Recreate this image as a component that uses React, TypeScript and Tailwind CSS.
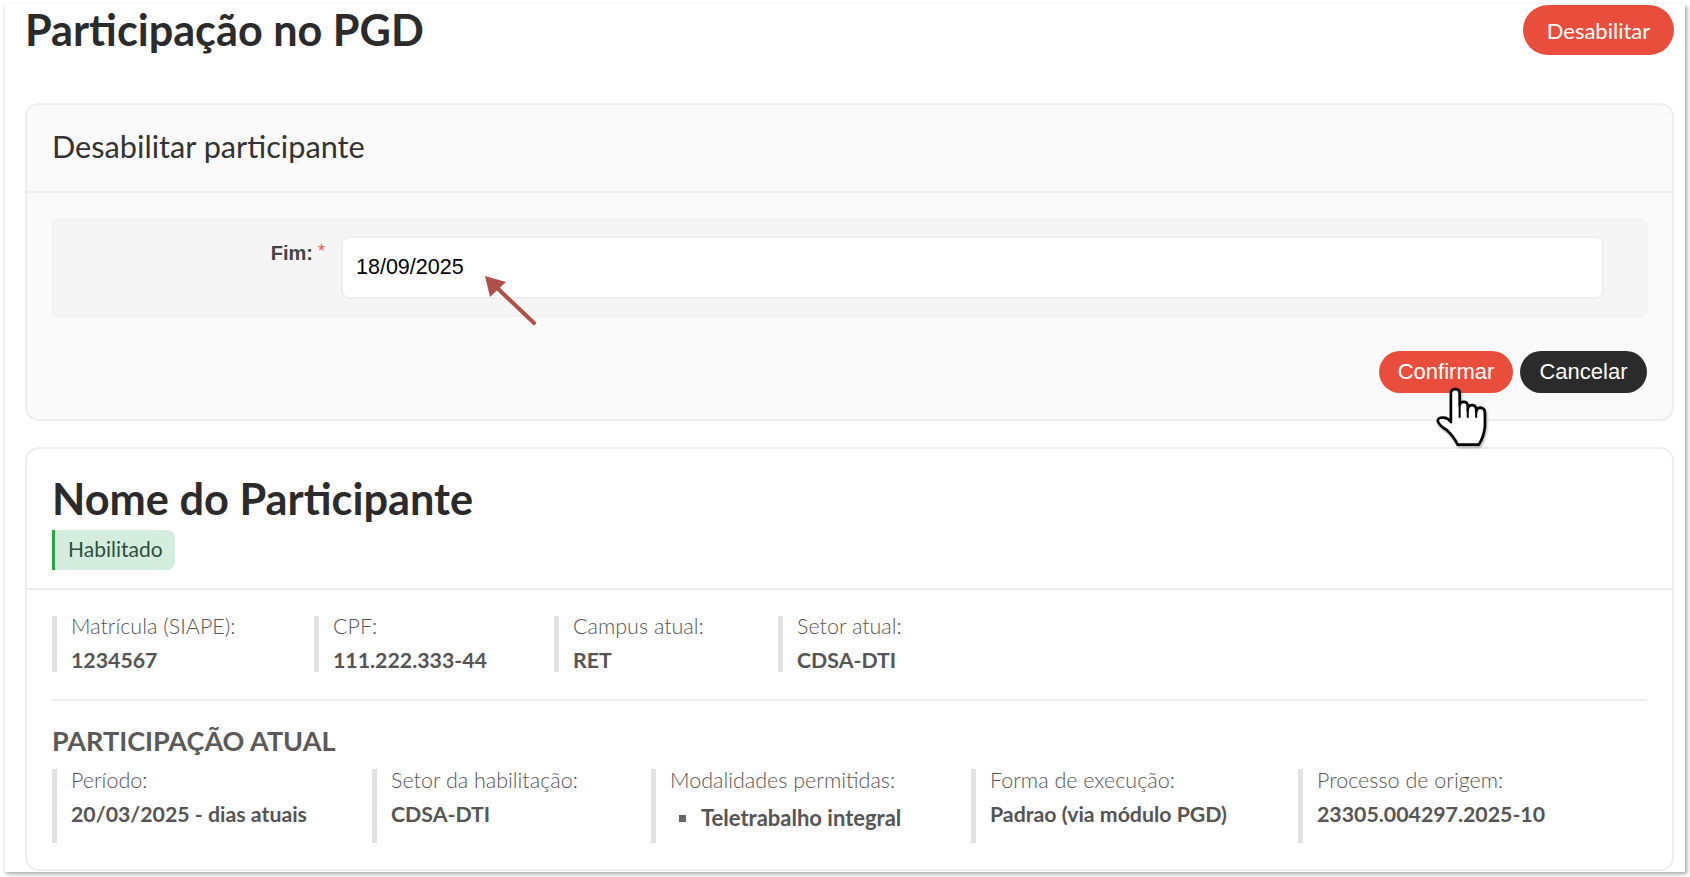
const resumo = [
  { label: 'Matrícula (SIAPE):', value: '1234567', width: 'w-[262px]' },
  { label: 'CPF:', value: '111.222.333-44', width: 'w-[240px]' },
  { label: 'Campus atual:', value: 'RET', width: 'w-[224px]' },
  { label: 'Setor atual:', value: 'CDSA-DTI', width: 'w-[200px]' },
];

const participacao = [
  { label: 'Período:', value: '20/03/2025 - dias atuais', width: 'w-[320px]' },
  { label: 'Setor da habilitação:', value: 'CDSA-DTI', width: 'w-[279px]' },
  { label: 'Modalidades permitidas:', value: 'Teletrabalho integral', width: 'w-[320px]', bullet: true },
  { label: 'Forma de execução:', value: 'Padrao (via módulo PGD)', width: 'w-[327px]' },
  { label: 'Processo de origem:', value: '23305.004297.2025-10', width: 'w-[300px]' },
];

function Campo({ label, value, width, bullet, tall }: { label: string; value: string; width: string; bullet?: boolean; tall?: boolean }) {
  return (
    <div className={`${width} ${tall ? 'h-[74px]' : 'h-[56px]'} shrink-0 border-l-[5px] border-[#e2e2e2] pl-[14px]`}>
      <div className={`${tall ? 'mt-0' : '-mt-[1px]'} h-[23px] text-[21.5px] leading-[23px] font-light text-[#555555]`}>{label}</div>
      {bullet ? (
        <div className={`mt-[14px] flex h-[24px] items-center pl-[9px] text-[22px] leading-[24px] font-bold text-[#555555]`}>
          <span className="mr-[15px] h-[7px] w-[7px] bg-[#666666]" />
          {value}
        </div>
      ) : (
        <div className={`${tall ? 'mt-[10px]' : 'mt-[10px]'} h-[24px] text-[21.3px] leading-[24px] font-bold text-[#555555]`}>{value}</div>
      )}
    </div>
  );
}

export default function App() {
  return (
    <div className="h-[877px] w-[1690px] overflow-hidden bg-white font-['Lato',sans-serif]">
      <div className="relative ml-[4px] mt-[4px] h-[868px] w-[1681px] border-l border-[#eeeeee] bg-white pl-[20px] pr-[11px] shadow-[2px_2px_4px_rgba(0,0,0,0.35)]">
        {/* Cabecalho */}
        <div className="flex h-[96px] items-start justify-between">
          <h1 className="text-[43.2px] leading-[50px] font-bold text-[#2b2b2b]">Participação no PGD</h1>
          <button className="mt-[1px] h-[50px] w-[151px] rounded-full bg-[#e94e3d] text-[22px] text-white">Desabilitar</button>
        </div>

        {/* Formulario */}
        <section className="mt-[3px] h-[318px] rounded-[14px] border-2 border-[#eeeeee] bg-[#fafafa]">
          <div className="flex h-[88px] items-center border-b-2 border-[#eeeeee] pb-[2px] pl-[25px] text-[30.7px] text-[#333333]">
            Desabilitar participante
          </div>
          <div className="px-[25px] pt-[26px]">
            <div className="flex h-[98px] rounded-[6px] border border-[#f0f0f0] bg-[#f5f5f5] pt-[16px]">
              <div className="flex w-[272px] justify-end pt-[4px] font-['Liberation_Sans',sans-serif] text-[20px] leading-[26px] font-bold text-[#444444]">
                Fim:<span className="ml-[5px] text-[18px] leading-[22px] font-normal text-[#e9574a]">*</span>
              </div>
              <input
                readOnly
                value="18/09/2025"
                className="ml-[16px] h-[63px] w-[1263px] rounded-[8px] border-2 border-[#eeeeee] bg-white pl-[13px] font-['Liberation_Sans',sans-serif] text-[21.5px] text-black outline-none"
              />
            </div>
            <div className="mt-[34px] flex justify-end gap-[7px]">
              <button className="h-[42px] w-[134px] rounded-full bg-[#e94e3d] pb-[2px] font-['Liberation_Sans',sans-serif] text-[22px] text-white">Confirmar</button>
              <button className="h-[42px] w-[127px] rounded-full bg-[#2b2b2b] pb-[2px] font-['Liberation_Sans',sans-serif] text-[22px] text-white">Cancelar</button>
            </div>
          </div>
        </section>

        {/* Dados do participante */}
        <section className="mt-[26px] h-[424px] rounded-[14px] border-2 border-[#eeeeee] bg-white">
          <div className="h-[141px] border-b-2 border-[#eeeeee] px-[25px] pt-[22px]">
            <h2 className="text-[43.3px] leading-[54px] font-bold text-[#2b2b2b]">Nome do Participante</h2>
            <span className="mt-[5px] flex h-[40px] w-[123px] items-center rounded-r-[8px] border-l-[3px] border-[#28a745] bg-[#d4edde] pb-[2px] pl-[13px] text-[21px] text-[#2f4f3c]">
              Habilitado
            </span>
          </div>
          <div className="px-[25px] pt-[26px]">
            <div className="flex">
              {resumo.map((item) => (
                <Campo key={item.label} {...item} />
              ))}
            </div>
            <div className="mt-[27px] border-t-2 border-[#eeeeee]" />
            <h3 className="mt-[23px] text-[27px] leading-[34px] font-bold text-[#5a5a5a]">PARTICIPAÇÃO ATUAL</h3>
            <div className="mt-[11px] flex">
              {participacao.map((item) => (
                <Campo key={item.label} {...item} tall />
              ))}
            </div>
          </div>
        </section>

        {/* Anotacoes sobre a captura */}
        <svg className="absolute left-[476px] top-[269px]" width="60" height="62" viewBox="0 0 60 62">
          <line x1="53" y1="50" x2="12" y2="11" stroke="#b0504a" strokeWidth="4" strokeLinecap="round" />
          <polygon points="4,3 25,9 9,24" fill="#b0504a" />
        </svg>
        <svg className="absolute left-[1429px] top-[381px] drop-shadow-[1px_2px_1px_rgba(0,0,0,0.3)]" width="54" height="64" viewBox="285 165 160 190">
          <path
            d="M335 262 L335 190 Q335 177 348 177 Q361 177 361 190 L361 225 Q361 215 373 215 Q385 215 385 228 L385 240 Q385 225 397 225 Q410 225 410 238 L410 245 Q412 232 423 232 Q436 234 436 248 L436 290 Q432 320 418 342 L355 342 Q345 320 322 298 Q300 285 296 272 Q296 260 315 262 Q328 264 335 275 Z"
            fill="#ffffff"
            stroke="#000000"
            strokeWidth="8"
            strokeLinejoin="round"
          />
          <path d="M361 225 L361 262 M385 240 L385 262 M410 245 L410 262" fill="none" stroke="#000000" strokeWidth="6" />
        </svg>
      </div>
    </div>
  );
}
